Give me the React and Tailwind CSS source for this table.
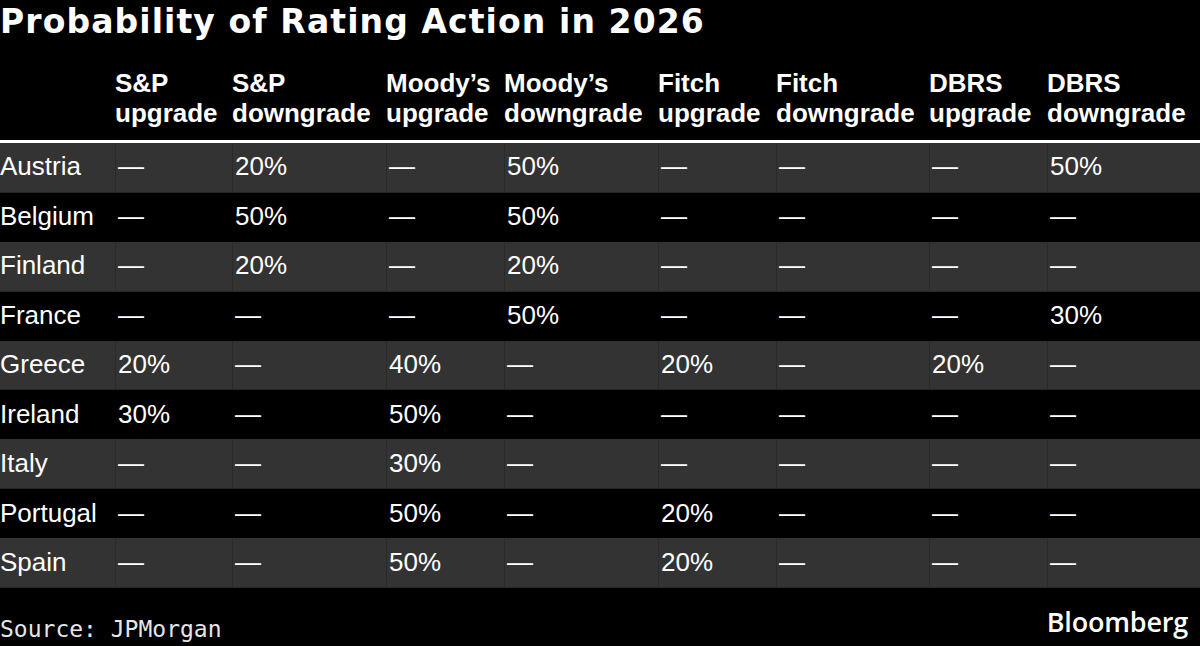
import React from "react";

const cols = [
  ["S&P", "upgrade"],
  ["S&P", "downgrade"],
  ["Moody’s", "upgrade"],
  ["Moody’s", "downgrade"],
  ["Fitch", "upgrade"],
  ["Fitch", "downgrade"],
  ["DBRS", "upgrade"],
  ["DBRS", "downgrade"],
];

const D = "—";

const rows = [
  ["Austria", D, "20%", D, "50%", D, D, D, "50%"],
  ["Belgium", D, "50%", D, "50%", D, D, D, D],
  ["Finland", D, "20%", D, "20%", D, D, D, D],
  ["France", D, D, D, "50%", D, D, D, "30%"],
  ["Greece", "20%", D, "40%", D, "20%", D, "20%", D],
  ["Ireland", "30%", D, "50%", D, D, D, D, D],
  ["Italy", D, D, "30%", D, D, D, D, D],
  ["Portugal", D, D, "50%", D, "20%", D, D, D],
  ["Spain", D, D, "50%", D, "20%", D, D, D],
];

const grid =
  "grid grid-cols-[115px_117px_154px_118px_154px_118px_153px_118px_153px]";

const App = () => {
  return (
    <div className="w-[1200px] h-[646px] bg-black text-white overflow-hidden flex flex-col">
      {/* Title */}
      <div className="h-[42px] flex items-center">
        <h1 className="font-['DejaVu_Sans',sans-serif] font-bold text-[33px] leading-none tracking-[1.1px] whitespace-nowrap">
          Probability of Rating Action in 2026
        </h1>
      </div>

      {/* Header */}
      <div
        className={`${grid} h-[98px] items-end pb-[12px] font-['Liberation_Sans',Arial,sans-serif] font-bold text-[26px] leading-[30px]`}
      >
        <div />
        {cols.map((c, i) => (
          <div key={i} className="whitespace-nowrap">
            {c[0]}
            <br />
            {c[1]}
          </div>
        ))}
      </div>
      <div className="h-[3px] bg-white" />

      {/* Body */}
      <div className="h-[445px] flex flex-col font-['Liberation_Sans',Arial,sans-serif] text-[26px] leading-none">
        {rows.map((r, i) => (
          <div
            key={i}
            className={`${grid} flex-1 ${
              i % 2 === 0 ? "bg-[#333333] border-b border-[#262626]" : "bg-black"
            }`}
          >
            {r.map((v, j) => (
              <div
                key={j}
                className={`flex items-center whitespace-nowrap pb-[2px] ${
                  j > 0
                    ? i % 2 === 0
                      ? "border-l border-[#2a2a2a] pl-[2px]"
                      : "pl-[3px]"
                    : ""
                }`}
              >
                {v}
              </div>
            ))}
          </div>
        ))}
      </div>

      {/* Footer */}
      <div className="flex-1 flex items-end justify-between pb-[5px]">
        <span className="font-['DejaVu_Sans_Mono',monospace] text-[23px] text-[#e6e6e6] leading-none">
          Source: JPMorgan
        </span>
        <span className="font-['Open_Sans',sans-serif] font-semibold text-[27px] leading-none tracking-[-0.2px] pr-[12px] pb-[6px]">
          Bloomberg
        </span>
      </div>
    </div>
  );
};

export default App;
